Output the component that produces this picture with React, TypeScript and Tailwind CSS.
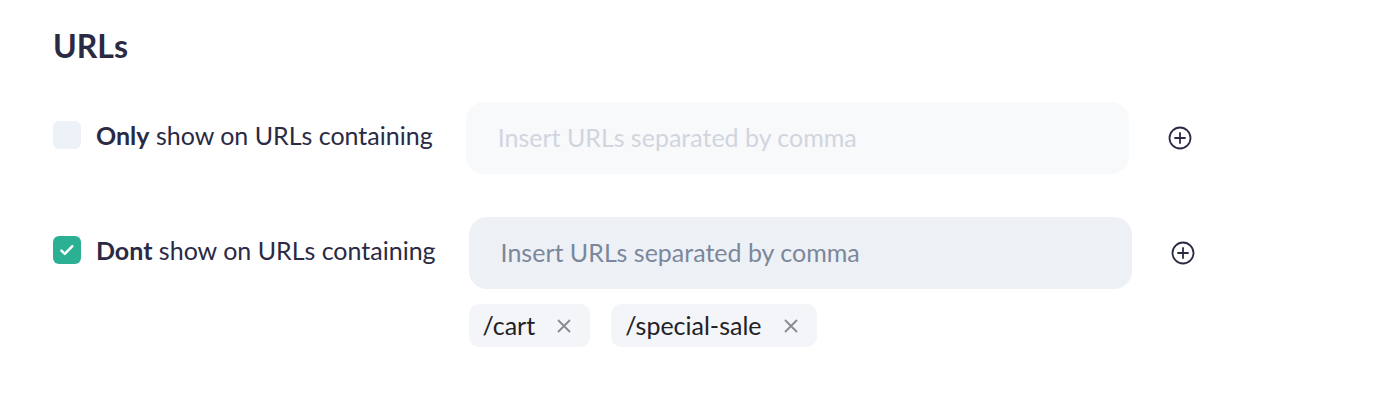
import React from "react";

const font = { fontFamily: "Lato, 'Noto Sans', sans-serif" };

function PlusCircle() {
  return (
    <svg width="24" height="24" viewBox="0 0 24 24" fill="none" stroke="#2b2a44" strokeWidth="1.8" strokeLinecap="round">
      <circle cx="12" cy="12" r="10.5" />
      <path d="M12 7v10M7 12h10" />
    </svg>
  );
}

function Check() {
  return (
    <svg width="18" height="18" viewBox="0 0 18 18" fill="none" stroke="#fff" strokeWidth="2.4" strokeLinecap="round" strokeLinejoin="round">
      <path d="M3.4 9.6l3.4 3.3L14.4 5.2" />
    </svg>
  );
}

function Chip({ label }: { label: string }) {
  return (
    <div className="flex h-[43px] items-center gap-[22px] rounded-[10px] bg-[#f3f5f9] pl-[14px] pr-[19px]">
      <span className="text-[25px] leading-none text-[#222226]">{label}</span>
      <svg width="14" height="14" viewBox="0 0 14 14" stroke="#8a8a8e" strokeWidth="1.8" strokeLinecap="round">
        <path d="M1.5 1.5l11 11M12.5 1.5l-11 11" />
      </svg>
    </div>
  );
}

function Row({
  bold,
  checked,
  chips,
}: {
  bold: string;
  checked: boolean;
  chips?: string[];
}) {
  return (
    <div className="flex items-start gap-[33px]">
      <label className="mt-[19px] flex h-[28px] items-center gap-[15px]">
        <span
          className={
            checked
              ? "flex h-[28px] w-[28px] items-center justify-center rounded-[6px] bg-[#2bb093]"
              : "flex h-[28px] w-[28px] items-center justify-center rounded-[6px] bg-[#edf1f8]"
          }
        >
          {checked && <Check />}
        </span>
        <span className="text-[25px] leading-none text-[#2b2a44]">
          <b className="font-bold">{bold}</b> show on URLs containing
        </span>
      </label>
      <div className="flex flex-col gap-[15px]">
        <div className="flex items-center gap-[39px]">
          <div
            className={
              checked
                ? "flex h-[72px] w-[663px] items-center rounded-[18px] bg-[#edf1f6] px-[32px] text-[25px] text-[#7b879a]"
                : "flex h-[72px] w-[663px] items-center rounded-[18px] bg-[#f8f9fb] px-[32px] text-[25px] text-[#d0d5de]"
            }
          >
            Insert URLs separated by comma
          </div>
          <PlusCircle />
        </div>
        {chips && (
          <div className="flex gap-[21px]">
            {chips.map((c) => (
              <Chip key={c} label={c} />
            ))}
          </div>
        )}
      </div>
    </div>
  );
}

export default function App() {
  return (
    <div className="h-[402px] w-[1386px] bg-white pl-[53px] pt-[26px]" style={font}>
      <h2 className="text-[32px] font-bold leading-[40px] text-[#2b2a44]">URLs</h2>
      <div className="mt-[36px] flex flex-col gap-[43px]">
        <Row bold="Only" checked={false} />
        <Row bold="Dont" checked={true} chips={["/cart", "/special-sale"]} />
      </div>
    </div>
  );
}
